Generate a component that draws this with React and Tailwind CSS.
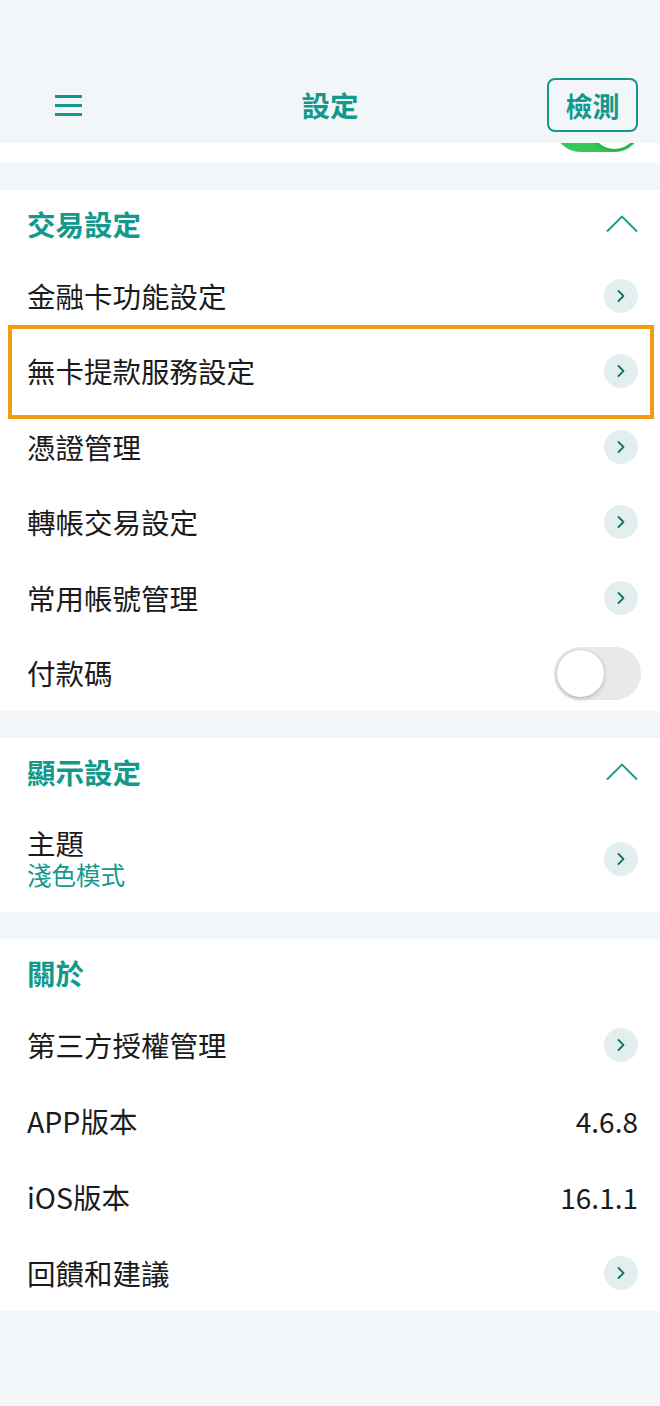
import { ChevronRight } from "lucide-react";

const font = { fontFamily: '"Noto Sans CJK TC", "Noto Sans", sans-serif' };

// round chevron button on the right of a row
function Arrow() {
    return (
        <div className="w-[34px] h-[34px] rounded-full bg-[#e3efee] flex items-center justify-center">
            <ChevronRight size={20} strokeWidth={2.2} className="text-[#1d6f6a]" />
        </div>
    );
}

function CaretUp() {
    return (
        <svg width="32" height="18" viewBox="0 0 32 18" fill="none" className="text-[#12998c]">
            <polyline points="1,16.5 16,1.5 31,16.5" stroke="currentColor" strokeWidth="1.8" />
        </svg>
    );
}

function SectionHeader({ title, collapsible = true }) {
    return (
        <div className="h-[68px] pl-[27px] pr-[22px] flex items-center justify-between">
            <span className="text-[28.5px] font-bold text-[#12998c] leading-none">{title}</span>
            {collapsible && <CaretUp />}
        </div>
    );
}

function Row({ label, right, h = "h-[75.5px]", highlight = false }) {
    return (
        <div className={`relative ${h} pl-[27px] pr-[22px] flex items-center justify-between`}>
            <span className="text-[28.5px] text-[#1b1b1b] leading-none">{label}</span>
            {right ?? <Arrow />}
            {/* annotation frame */}
            {highlight && (
                <div className="absolute left-[8px] right-[6px] top-[-9px] bottom-[-10px] border-[4px] border-[#f29c0f] pointer-events-none" />
            )}
        </div>
    );
}

function Toggle({ on = false }) {
    return (
        <div
            className={`w-[87px] h-[53px] rounded-full p-[3px] flex ${
                on ? "bg-[#34c759] justify-end" : "bg-[#e9e9eb] justify-start"
            }`}
        >
            <div className="w-[47px] h-[47px] rounded-full bg-white shadow-[0_2px_5px_rgba(0,0,0,0.18),0_0_0_1px_rgba(0,0,0,0.04)]" />
        </div>
    );
}

export default function App() {
    return (
        <div className="w-full h-[1406px] bg-[#f3f6f9]" style={font}>
            {/* top bar */}
            <div className="h-[143px] pt-[78px] px-[22px] flex items-start justify-between">
                <div className="h-[54px] w-[91px] pl-[33px] flex items-center">
                    <div className="flex flex-col gap-[6px]">
                        <div className="w-[27px] h-[3px] bg-[#12998c]" />
                        <div className="w-[27px] h-[3px] bg-[#12998c]" />
                        <div className="w-[27px] h-[3px] bg-[#12998c]" />
                    </div>
                </div>
                <div className="h-[54px] flex items-center">
                    <span className="text-[28.5px] font-bold text-[#12998c] leading-none">設定</span>
                </div>
                <div className="h-[54px] w-[91px] border-2 border-[#12998c] rounded-[8px] flex items-center justify-center">
                    <span className="text-[27px] font-bold text-[#12998c] leading-none">檢測</span>
                </div>
            </div>

            {/* scrolled-under row, only the bottom of its switch shows */}
            <div className="h-[20px] bg-white overflow-hidden flex justify-end pr-[19px]">
                <div className="mt-[-44px]">
                    <Toggle on />
                </div>
            </div>

            <div className="h-[27px]" />

            {/* 交易設定 */}
            <div className="bg-white">
                <SectionHeader title="交易設定" />
                <Row label="金融卡功能設定" />
                <Row label="無卡提款服務設定" highlight />
                <Row label="憑證管理" />
                <Row label="轉帳交易設定" />
                <Row label="常用帳號管理" />
                <Row label="付款碼" right={<div className="mr-[-3px]"><Toggle /></div>} />
            </div>

            <div className="h-[27px]" />

            {/* 顯示設定 */}
            <div className="bg-white">
                <SectionHeader title="顯示設定" />
                <div className="h-[106px] pl-[27px] pr-[22px] flex items-center justify-between">
                    <div className="flex flex-col gap-[6px] pb-[2px]">
                        <span className="text-[28.5px] text-[#1b1b1b] leading-none">主題</span>
                        <span className="text-[24.5px] text-[#12998c] leading-none">淺色模式</span>
                    </div>
                    <Arrow />
                </div>
            </div>

            <div className="h-[27px]" />

            {/* 關於 */}
            <div className="bg-white">
                <SectionHeader title="關於" collapsible={false} />
                <Row label="第三方授權管理" h="h-[76px]" />
                <Row
                    label="APP版本"
                    h="h-[76px]"
                    right={<span className="text-[28px] text-[#1b1b1b] leading-none">4.6.8</span>}
                />
                <Row
                    label="iOS版本"
                    h="h-[76px]"
                    right={<span className="text-[28px] text-[#1b1b1b] leading-none">16.1.1</span>}
                />
                <Row label="回饋和建議" h="h-[76px]" />
            </div>
        </div>
    );
}
